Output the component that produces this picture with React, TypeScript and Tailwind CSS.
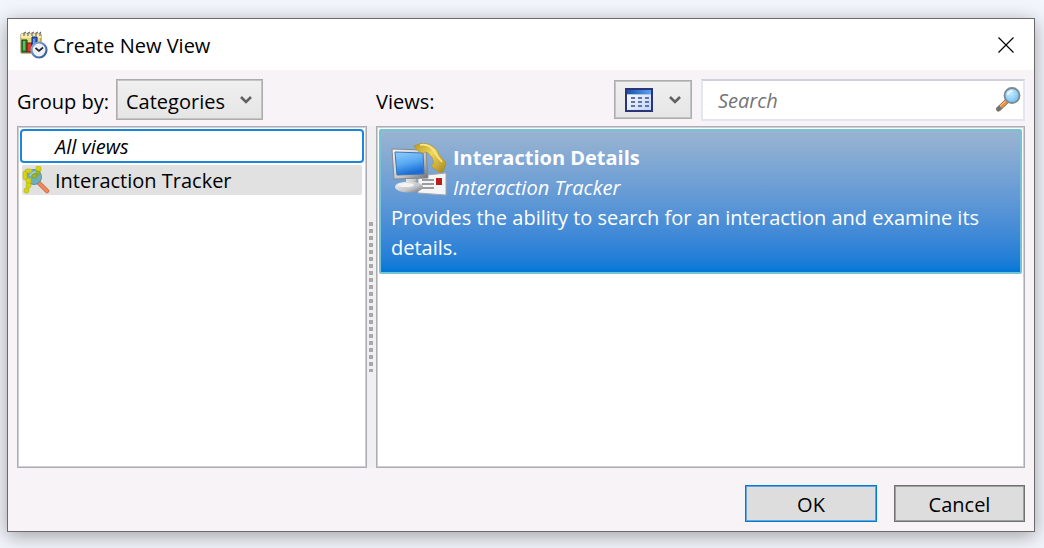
import { useState } from "react";

function ReportClockIcon() {
  return (
    <svg className="h-[28px] w-[28px] shrink-0" viewBox="0 0 28 28" aria-hidden="true">
      <defs>
        <linearGradient id="clockRim" x1="0" y1="0" x2="1" y2="1">
          <stop offset="0" stopColor="#8fb0dc" />
          <stop offset="1" stopColor="#2c548f" />
        </linearGradient>
      </defs>
      <path d="M1 3h20v19H1z" fill="#e8d678" stroke="#8d7b3c" strokeWidth="1" />
      <path d="M1 3h20v4H1z" fill="#f7eca4" />
      <path
        d="M4 5V2l2-1M8 5V2l2-1M12 5V2l2-1M16 5V2l2-1M20 5V2l1-1"
        fill="none"
        stroke="#6b6b70"
        strokeWidth="1.2"
      />
      <path d="M2 9h5v12H2z" fill="#2f9a35" stroke="#123f16" />
      <path d="M4 10v9" stroke="#9be08c" />
      <path d="M7 12h5v9H7z" fill="#e0392b" stroke="#6d1810" />
      <path d="M12 6h5v12h-5z" fill="#2b62d8" stroke="#14296f" />
      <path d="M14 8v8" stroke="#a9c6ff" />
      <circle cx="19" cy="19" r="7.500" fill="#eef2f7" stroke="url(#clockRim)" strokeWidth="2.200" />
      <path d="M15.500 17l3.500 3 4-3.500" fill="none" stroke="#20242c" strokeWidth="1.700" />
    </svg>
  );
}

function TrackerIcon() {
  return (
    <svg className="h-[28px] w-[28px] shrink-0" viewBox="0 0 28 28" aria-hidden="true">
      <path d="M17 17l8 8" stroke="#c8643c" strokeWidth="4.500" strokeLinecap="round" />
      <path d="M17 17l8 8" stroke="#f08a5c" strokeWidth="3" strokeLinecap="round" />
      <circle cx="12" cy="11" r="7.500" fill="#6fb0bb" stroke="#5d929b" />
      <path d="M8 10q2-4 6-4" fill="none" stroke="#a3d2d6" strokeWidth="1.500" />
      <g fill="#d5d414" stroke="#aeaf1a" strokeWidth="0.600">
        <rect x="14" y="0" width="5" height="6" rx="2" />
        <rect x="3" y="3" width="7" height="4" rx="2" />
        <rect x="1" y="5" width="4" height="9" rx="2" />
        <rect x="4" y="12" width="5" height="6" rx="2" />
        <rect x="4" y="17" width="5" height="5" rx="2" />
        <rect x="2" y="22" width="5" height="5" rx="2" />
      </g>
      <g fill="#9fb52a" stroke="#7e9626" strokeWidth="0.600">
        <rect x="14" y="5" width="4" height="4" rx="1.500" />
        <rect x="10" y="8" width="5" height="4" rx="1.500" />
      </g>
    </svg>
  );
}

function InteractionIcon() {
  return (
    <svg className="h-[54px] w-[56px] shrink-0" viewBox="0 0 56 54" aria-hidden="true">
      <defs>
        <linearGradient id="screen" x1="0" y1="0" x2="0.300" y2="1">
          <stop offset="0" stopColor="#8fcdfb" />
          <stop offset="0.550" stopColor="#57a9f2" />
          <stop offset="1" stopColor="#1b6bd6" />
        </linearGradient>
        <linearGradient id="metal" x1="0" y1="0" x2="1" y2="1">
          <stop offset="0" stopColor="#f6f6f6" />
          <stop offset="0.600" stopColor="#c3c5c8" />
          <stop offset="1" stopColor="#6b6d70" />
        </linearGradient>
        <linearGradient id="handset" x1="0" y1="0" x2="1" y2="1">
          <stop offset="0" stopColor="#b8961e" />
          <stop offset="0.450" stopColor="#efd75a" />
          <stop offset="1" stopColor="#a78318" />
        </linearGradient>
      </defs>
      <path d="M27 33l28-3v22l-28-2z" fill="#f5f5f5" stroke="#a5a9ad" />
      <path d="M31 37h12M31 41h12M31 45h12" stroke="#7c7f84" strokeWidth="1.600" />
      <path d="M45 35h6v7h-6z" fill="#b81d1d" />
      <path d="M15 34h10l1 8H15z" fill="url(#metal)" />
      <ellipse cx="18" cy="44" rx="14" ry="5.500" fill="url(#metal)" />
      <ellipse cx="15" cy="42" rx="8" ry="2" fill="#f3f3f3" />
      <path d="M1 6l34 1 2 28-34 1z" fill="url(#metal)" stroke="#868a8e" />
      <path d="M4 9l28 1 1 21-27 1z" fill="url(#screen)" stroke="#3d76b4" />
      <path
        d="M23 3Q30-1 37 1q8 3 11 10 2 4 6 7 2 3 0 6-1 5-5 6l-8-6q-1-3 2-4-1-6-6-10-3-2-5 0-5 0-9-7z"
        fill="url(#handset)"
        stroke="#a88e2e"
        strokeWidth="0.600"
      />
      <path d="M29 2q9-2 14 6 3 6 8 11" fill="none" stroke="#f8e88e" strokeWidth="1.600" />
    </svg>
  );
}

function TableIcon() {
  return (
    <svg className="h-[24px] w-[28px]" viewBox="0 0 28 24" aria-hidden="true">
      <defs>
        <linearGradient id="tableHead" x1="0" y1="0" x2="1" y2="0">
          <stop offset="0" stopColor="#1c50a8" />
          <stop offset="1" stopColor="#5ea2ee" />
        </linearGradient>
        <linearGradient id="tableBody" x1="0" y1="0" x2="1" y2="1">
          <stop offset="0" stopColor="#ffffff" />
          <stop offset="1" stopColor="#bcd6f8" />
        </linearGradient>
      </defs>
      <path d="M1 1h26v22H1z" fill="url(#tableBody)" stroke="#2c3479" strokeWidth="2" />
      <path d="M2 2h24v4H2z" fill="url(#tableHead)" />
      <path d="M2 6h24v1H2z" fill="#a7c5ef" />
      <path
        d="M6 10h4M13 10h4M20 10h4M6 14h4M13 14h4M20 14h4M6 18h4M13 18h4M20 18h4"
        stroke="#6a71a2"
        strokeWidth="2"
      />
    </svg>
  );
}

function MagnifierIcon() {
  return (
    <svg className="h-[26px] w-[26px] shrink-0" viewBox="0 0 26 26" aria-hidden="true">
      <defs>
        <radialGradient id="lens" cx="0.400" cy="0.350" r="0.700">
          <stop offset="0" stopColor="#c9edff" />
          <stop offset="1" stopColor="#6cbcf0" />
        </radialGradient>
      </defs>
      <path d="M3.500 22l8-7.500" stroke="#77716c" strokeWidth="5" strokeLinecap="round" />
      <path d="M5.500 20l6.500-6" stroke="#f2913a" strokeWidth="3.500" />
      <path d="M5 19l6-5.500" stroke="#ffc98a" strokeWidth="1" />
      <circle cx="17" cy="8.500" r="7.500" fill="url(#lens)" stroke="#7e8894" strokeWidth="1.800" />
      <path d="M12.500 8q1-4 5-4" fill="none" stroke="#f1fbff" strokeWidth="1.500" />
    </svg>
  );
}

function Chevron({ className }: { className: string }) {
  return (
    <svg className={className} viewBox="0 0 12 10" fill="none" aria-hidden="true">
      <path d="M1 2l5 5 5-5" stroke="#606060" strokeWidth="2.600" />
    </svg>
  );
}

export default function App() {
  const [search, setSearch] = useState("");

  return (
    <div className="flex min-h-screen flex-col bg-[#f3f5fc] pt-[18px] pr-[9px] pb-4 pl-[7px] font-['Open_Sans','Noto_Sans',sans-serif] text-[20px] leading-[30px] text-black">
      <div
        role="dialog"
        aria-labelledby="title"
        className="flex flex-1 flex-col border border-[#6b6b6e] bg-[#f7f3f7] shadow-[0_4px_18px_rgba(0,0,0,0.35)]"
      >
        <header className="flex h-[51px] items-center bg-white pr-[20px] pl-3">
          <ReportClockIcon />
          <h1 id="title" className="ml-[5px] flex-1 pt-0.5">
            Create New View
          </h1>
          <button type="button" aria-label="Close">
            <svg className="h-4 w-4" viewBox="0 0 16 16" fill="none" stroke="#000" strokeWidth="1.200">
              <path d="M0.500 0.500l15 15M15.500 0.500l-15 15" />
            </svg>
          </button>
        </header>

        <main className="flex flex-1 flex-col p-[9px]">
          <div className="flex flex-1">
            <section className="flex w-[350px] shrink-0 flex-col">
              <div className="mb-[5px] flex h-[42px] items-start">
                <label htmlFor="group" className="w-[99px] pt-2">
                  Group by:
                </label>
                <div className="grid">
                  <select
                    id="group"
                    className="col-start-1 row-start-1 h-[41px] w-[147px] appearance-none border border-[#acacac] bg-linear-to-b from-[#f0f0f0] to-[#e5e5e5] pt-1 pl-[9px] shadow-[inset_0_0_0_1px_#c4c4c4]"
                  >
                    <option>Categories</option>
                  </select>
                  <Chevron className="pointer-events-none col-start-1 row-start-1 mr-[11px] h-[10px] w-3 self-center justify-self-end" />
                </div>
              </div>
              <ul
                role="listbox"
                aria-label="Categories"
                className="flex-1 border border-[#abadb3] bg-white p-0.5 shadow-[inset_0_0_0_1px_#cfd0d3]"
              >
                <li
                  role="option"
                  aria-selected="true"
                  className="flex h-[34px] items-center rounded border-2 border-[#1c86db] pt-0.5 pl-[33px] italic"
                >
                  All views
                </li>
                <li
                  role="option"
                  aria-selected="false"
                  className="mx-0.5 mt-0.5 flex h-[30px] items-center gap-[5px] rounded-xs bg-[#e1e1e1]"
                >
                  <TrackerIcon />
                  <span className="pt-0.5">Interaction Tracker</span>
                </li>
              </ul>
            </section>

            <div className="mt-[47px] flex w-[9px] shrink-0 items-center justify-center bg-[#f0f0f0] pr-px">
              <div className="h-[150px] w-1 bg-[repeating-linear-gradient(to_bottom,#a8a8a8_0,#a8a8a8_4px,#f0f0f0_4px,#f0f0f0_7px)]" />
            </div>

            <section className="flex min-w-0 flex-1 flex-col">
              <div className="mb-[5px] flex h-[42px] items-start gap-[9px]">
                <h2 className="flex-1 pt-2">Views:</h2>
                <button
                  type="button"
                  aria-label="View style"
                  aria-haspopup="listbox"
                  className="mt-px flex h-[39px] w-[78px] items-center justify-between border border-[#acacac] bg-linear-to-b from-[#f0f0f0] to-[#e5e5e5] px-[10px] shadow-[inset_0_0_0_1px_#c4c4c4]"
                >
                  <TableIcon />
                  <Chevron className="h-[10px] w-3" />
                </button>
                <div className="flex h-[42px] w-[324px] items-center border-2 border-[#e3e6ee] border-t-[#cfd0d8] bg-white pr-0.5 pl-[15px]">
                  <input
                    type="text"
                    aria-label="Search"
                    placeholder="Search"
                    value={search}
                    onChange={(e) => setSearch(e.target.value)}
                    className="min-w-0 flex-1 pt-0.5 outline-none placeholder:text-[#757575] placeholder:italic"
                  />
                  <MagnifierIcon />
                </div>
              </div>
              <ul
                role="listbox"
                aria-label="Views"
                className="flex-1 border border-[#abadb3] bg-white p-0.5 shadow-[inset_0_0_0_1px_#cfd0d3]"
              >
                <li
                  role="option"
                  aria-selected="true"
                  className="rounded-xs border-2 border-[#74c3d6] bg-linear-to-b from-[#9ab4d1] to-[#0078d7] px-2.5 pt-3 pb-[9px] text-white"
                >
                  <div className="flex items-start gap-[6px]">
                    <InteractionIcon />
                    <div>
                      <h3 className="font-bold">Interaction Details</h3>
                      <p className="italic">Interaction Tracker</p>
                    </div>
                  </div>
                  <p>
                    Provides the ability to search for an interaction and examine its details.
                  </p>
                </li>
              </ul>
            </section>
          </div>

          <footer className="mt-[17px] flex justify-end gap-[17px]">
            <button
              type="button"
              className="h-[37px] w-[132px] border border-[#0078d7] bg-[#dddddd] pt-0.5 shadow-[inset_0_0_0_1px_#62a6da]"
            >
              OK
            </button>
            <button
              type="button"
              className="h-[37px] w-[131px] border border-[#707070] bg-[#dddddd] pt-0.5 shadow-[inset_0_0_0_1px_#a0a0a0]"
            >
              Cancel
            </button>
          </footer>
        </main>
      </div>
    </div>
  );
}
